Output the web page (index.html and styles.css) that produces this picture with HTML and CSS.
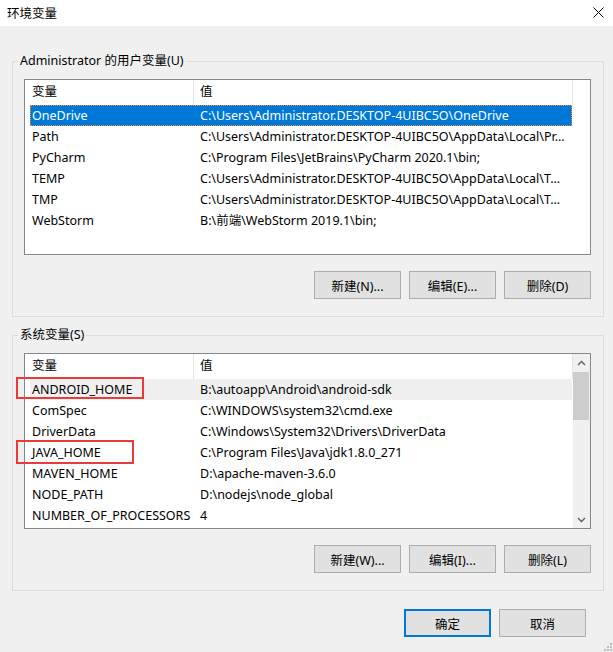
FILE: index.html
```html
<!DOCTYPE html>
<html lang="zh-CN">
<head>
<meta charset="utf-8">
<title>环境变量</title>
<link rel="stylesheet" href="styles.css">
</head>
<body>
<div class="titlebar">
  <span class="title">环境变量</span>
  <svg class="close" width="11" height="11" viewBox="0 0 11 11"><path d="M0.5 0.5 L10.5 10.5 M10.5 0.5 L0.5 10.5" stroke="#000" stroke-width="1" fill="none"/></svg>
</div>

<fieldset class="group first">
  <legend>Administrator 的用户变量(U)</legend>
  <div class="gbody">
    <div class="lv">
      <div class="lv-main">
        <div class="lv-head"><div class="hc c1">变量</div><div class="hc c2">值</div></div>
        <div class="row selected"><span class="c1">OneDrive</span><span class="c2">C:\Users\Administrator.DESKTOP-4UIBC5O\OneDrive</span></div>
        <div class="row"><span class="c1">Path</span><span class="c2">C:\Users\Administrator.DESKTOP-4UIBC5O\AppData\Local\Pr...</span></div>
        <div class="row"><span class="c1">PyCharm</span><span class="c2">C:\Program Files\JetBrains\PyCharm 2020.1\bin;</span></div>
        <div class="row"><span class="c1">TEMP</span><span class="c2">C:\Users\Administrator.DESKTOP-4UIBC5O\AppData\Local\T...</span></div>
        <div class="row"><span class="c1">TMP</span><span class="c2">C:\Users\Administrator.DESKTOP-4UIBC5O\AppData\Local\T...</span></div>
        <div class="row"><span class="c1">WebStorm</span><span class="c2">B:\前端\WebStorm 2019.1\bin;</span></div>
      </div>
    </div>
    <div class="btnrow">
      <button class="btn">新建(N)...</button>
      <button class="btn">编辑(E)...</button>
      <button class="btn">删除(D)</button>
    </div>
  </div>
</fieldset>

<fieldset class="group second">
  <legend>系统变量(S)</legend>
  <div class="gbody">
    <div class="lv">
      <div class="lv-main">
        <div class="lv-head"><div class="hc c1">变量</div><div class="hc c2">值</div></div>
        <div class="row hover"><span class="c1">ANDROID_HOME</span><span class="c2">B:\autoapp\Android\android-sdk</span><span class="mark mark-a"></span></div>
        <div class="row"><span class="c1">ComSpec</span><span class="c2">C:\WINDOWS\system32\cmd.exe</span></div>
        <div class="row"><span class="c1">DriverData</span><span class="c2">C:\Windows\System32\Drivers\DriverData</span></div>
        <div class="row"><span class="c1">JAVA_HOME</span><span class="c2">C:\Program Files\Java\jdk1.8.0_271</span><span class="mark mark-j"></span></div>
        <div class="row"><span class="c1">MAVEN_HOME</span><span class="c2">D:\apache-maven-3.6.0</span></div>
        <div class="row"><span class="c1">NODE_PATH</span><span class="c2">D:\nodejs\node_global</span></div>
        <div class="row"><span class="c1">NUMBER_OF_PROCESSORS</span><span class="c2">4</span></div>
      </div>
      <div class="sb">
        <div class="sb-btn"><svg width="9" height="6" viewBox="0 0 9 6"><path d="M1 5 L4.5 1.5 L8 5" stroke="#606060" stroke-width="1.4" fill="none"/></svg></div>
        <div class="sb-track"><div class="sb-thumb"></div></div>
        <div class="sb-btn"><svg width="9" height="6" viewBox="0 0 9 6"><path d="M1 1 L4.5 4.5 L8 1" stroke="#606060" stroke-width="1.4" fill="none"/></svg></div>
      </div>
    </div>
    <div class="btnrow">
      <button class="btn">新建(W)...</button>
      <button class="btn">编辑(I)...</button>
      <button class="btn">删除(L)</button>
    </div>
  </div>
</fieldset>

<div class="footer">
  <button class="btn primary">确定</button>
  <button class="btn">取消</button>
</div>

<svg class="grip" width="11" height="11" viewBox="0 0 11 11">
  <rect x="8" y="2" width="2" height="2" fill="#bcbcbc"/>
  <rect x="5" y="5" width="2" height="2" fill="#bcbcbc"/>
  <rect x="8" y="5" width="2" height="2" fill="#bcbcbc"/>
  <rect x="2" y="8" width="2" height="2" fill="#bcbcbc"/>
  <rect x="5" y="8" width="2" height="2" fill="#bcbcbc"/>
  <rect x="8" y="8" width="2" height="2" fill="#bcbcbc"/>
</svg>
</body>
</html>
```

FILE: styles.css
```css
html, body {
  margin: 0;
  padding: 0;
}
body {
  width: 613px;
  height: 652px;
  overflow: hidden;
  position: relative;
  background: #f0f0f0;
  font-family: "Noto Sans", "Noto Sans CJK SC", sans-serif;
  font-size: 12.5px;
  color: #000;
}
.titlebar {
  height: 26px;
  background: #fff;
  display: flex;
  align-items: center;
  justify-content: space-between;
  padding: 0 9px 2px 7px;
  box-sizing: border-box;
}
.title {
  font-size: 12.5px;
}
.close {
  display: block;
}
.group {
  margin: 0 9px 0 12px;
  padding: 0;
  border: 1px solid #dcdcdc;
  min-inline-size: 0;
}
.group.first {
  margin-top: 26px;
}
.group.second {
  margin-top: 9px;
}
.group legend {
  margin-left: 5px;
  padding: 0 2px;
  height: 18px;
  line-height: 18px;
}
.gbody {
  padding: 9px 12px 17px 11px;
}
.lv {
  height: 176px;
  box-sizing: border-box;
  border: 1px solid #828790;
  background: #fff;
  display: flex;
}
.lv-main {
  flex: 1;
  min-width: 0;
}
.lv-head {
  display: flex;
  height: 25px;
}
.hc {
  height: 25px;
  line-height: 24px;
  box-sizing: border-box;
  border-right: 1px solid #e5e5e5;
}
.hc.c1 {
  width: 169px;
  padding-left: 7px;
}
.hc.c2 {
  width: 379px;
  padding-left: 6px;
}
.row {
  display: flex;
  height: 21px;
  line-height: 21px;
  margin-left: 5px;
  width: 542px;
  position: relative;
  box-sizing: border-box;
}
.row .c1 {
  width: 164px;
  flex: none;
  padding-left: 2px;
  box-sizing: border-box;
  overflow: hidden;
  white-space: nowrap;
}
.row .c2 {
  flex: 1;
  min-width: 0;
  padding-left: 6px;
  overflow: hidden;
  white-space: nowrap;
}
.row.selected {
  background: #0078d7;
  color: #fff;
  outline: 1px dotted #ff8728;
  outline-offset: -1px;
}
.row.hover {
  background: #f0f0f0;
}
.mark {
  position: absolute;
  border: 2px solid #ec3a3a;
  box-sizing: border-box;
  pointer-events: none;
}
.mark-a {
  left: -14px;
  top: -2px;
  width: 128px;
  height: 22px;
}
.mark-j {
  left: -14px;
  top: -2px;
  width: 118px;
  height: 24px;
}
.sb {
  width: 17px;
  background: #f0f0f0;
  display: flex;
  flex-direction: column;
}
.sb-btn {
  height: 17px;
  display: flex;
  align-items: center;
  justify-content: center;
}
.sb-track {
  flex: 1;
}
.sb-thumb {
  height: 48px;
  margin: 1px 1px 0 0;
  background: #cdcdcd;
}
.btnrow {
  display: flex;
  justify-content: flex-end;
  gap: 8px;
  margin-top: 16px;
}
.btn {
  width: 87px;
  height: 28px;
  box-sizing: border-box;
  background: #e1e1e1;
  border: 1px solid #adadad;
  border-radius: 0;
  padding: 0;
  margin: 0;
  font-family: "Noto Sans", "Noto Sans CJK SC", sans-serif;
  font-size: 12.5px;
  color: #000;
}
.btn.primary {
  border: 2px solid #0078d7;
}
.footer {
  display: flex;
  justify-content: flex-end;
  gap: 8px;
  margin-top: 18px;
  padding-right: 27px;
}
.grip {
  position: absolute;
  right: 0;
  bottom: 0;
}
```
